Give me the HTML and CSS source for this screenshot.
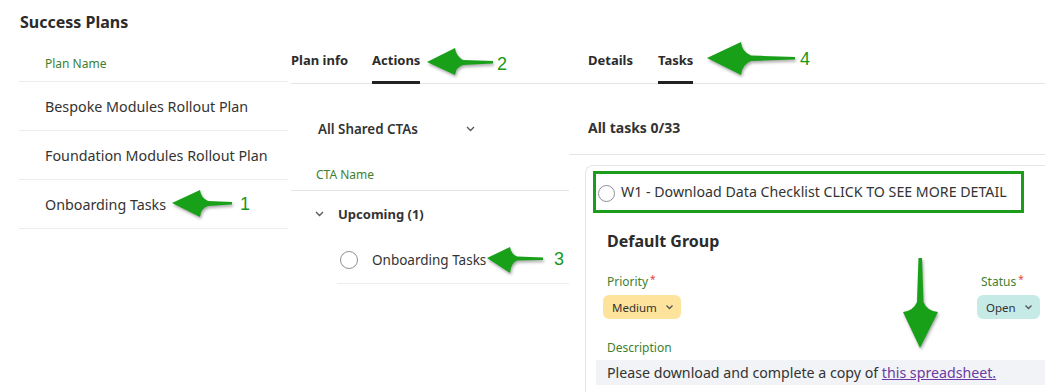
FILE: index.html
```html
<!DOCTYPE html>
<html lang="en">
<head>
    <meta charset="UTF-8">
    <meta name="viewport" content="width=device-width, initial-scale=1.0">
    <title>Success Plans - Tasks</title>
    <link rel="stylesheet" href="styles.css">
</head>
<body>
    <div class="page">
        <!-- Success plans list -->
        <section class="plans">
            <h2 class="plans-title">Success Plans</h2>
            <div class="plans-head">Plan Name</div>
            <div class="plan-row">Bespoke Modules Rollout Plan</div>
            <div class="plan-row">Foundation Modules Rollout Plan</div>
            <div class="plan-row">Onboarding Tasks</div>
        </section>

        <!-- Plan actions -->
        <section class="actions">
            <nav class="tabs">
                <span class="tab">Plan info</span>
                <span class="tab active">Actions</span>
            </nav>
            <div class="filter">
                <span>All Shared CTAs</span>
                <svg class="chevron" width="9" height="6" viewBox="0 0 9 6"><polyline points="1,1 4.5,4.5 8,1"/></svg>
            </div>
            <div class="col-head">CTA Name</div>
            <div class="group-row">
                <svg class="chevron" width="9" height="6" viewBox="0 0 9 6"><polyline points="1,1 4.5,4.5 8,1"/></svg>
                <span>Upcoming (1)</span>
            </div>
            <div class="cta-row">
                <span class="radio"></span>
                <span>Onboarding Tasks</span>
            </div>
        </section>

        <!-- CTA tasks -->
        <section class="tasks">
            <nav class="tabs">
                <span class="tab">Details</span>
                <span class="tab active">Tasks</span>
            </nav>
            <div class="tasks-count">All tasks 0/33</div>
            <div class="task-card">
                <div class="task-title">
                    <span class="radio radio-sm"></span>
                    <span>W1 - Download Data Checklist CLICK TO SEE MORE DETAIL</span>
                </div>
                <h3 class="group-name">Default Group</h3>
                <div class="fields">
                    <div class="field">
                        <div class="field-label">Priority<span class="req">*</span></div>
                        <span class="pill pill-medium">Medium
                            <svg class="chevron" width="9" height="6" viewBox="0 0 9 6"><polyline points="1.5,1.5 4.5,4.5 7.5,1.5"/></svg>
                        </span>
                    </div>
                    <div class="field">
                        <div class="field-label">Status<span class="req">*</span></div>
                        <span class="pill pill-open">Open
                            <svg class="chevron" width="9" height="6" viewBox="0 0 9 6"><polyline points="1.5,1.5 4.5,4.5 7.5,1.5"/></svg>
                        </span>
                    </div>
                </div>
                <div class="desc-label">Description</div>
                <div class="desc">Please download and complete a copy of <a href="#">this spreadsheet.</a></div>
            </div>
        </section>
    </div>

    <!-- Screenshot callouts -->
    <div class="callouts">
        <svg class="arrow arrow-1" width="64" height="32" viewBox="0 0 64 32"><path d="M2,15 L30,2 Q31,10 38,13 L62,14 L62,16.5 L38,18 Q31,20 30,29 Z"/></svg>
        <span class="num num-1">1</span>
        <svg class="arrow arrow-2" width="70" height="32" viewBox="0 0 70 32"><path d="M2,16 L30,2 Q31,10 38,14 L68,15 L68,17.5 L38,19 Q31,21 30,29 Z"/></svg>
        <span class="num num-2">2</span>
        <svg class="arrow arrow-3" width="60" height="30" viewBox="0 0 60 30"><path d="M2,13 L25,2 Q26,9 32,11.5 L58,12.5 L58,15 L32,15.5 Q26,18 25,28 Z"/></svg>
        <span class="num num-3">3</span>
        <svg class="arrow arrow-4" width="92" height="38" viewBox="0 0 92 38"><path d="M2,18 L36,2 Q37,12 46,15.5 L90,17 L90,19.5 L46,21 Q37,24.5 36,35 Z"/></svg>
        <span class="num num-4">4</span>
        <svg class="arrow arrow-down" width="40" height="94" viewBox="0 0 40 94"><path d="M19,92 L2,56 Q12,55 16,46 L17.5,2 L21,2 L22.5,46 Q26,55 37,56 Z"/></svg>
    </div>
</body>
</html>
```

FILE: styles.css
```css
/* Reset */
* {
    margin: 0;
    padding: 0;
    box-sizing: border-box;
}

body {
    font-family: 'Noto Sans', 'Open Sans', sans-serif;
    color: #333;
    background: #fff;
    width: 1045px;
    height: 392px;
    overflow: hidden;
    position: relative;
}

.page {
    display: flex;
    height: 100%;
}

/* Shared bits */
.chevron {
    fill: none;
    stroke: #555;
    stroke-width: 1.3;
    flex-shrink: 0;
}

.radio {
    width: 18px;
    height: 18px;
    border: 1.3px solid #8b8f97;
    border-radius: 50%;
    flex-shrink: 0;
}

.tabs {
    display: flex;
    align-items: flex-end;
    gap: 24px;
    height: 84px;
    border-bottom: 1px solid #e4e4e4;
}

.tab {
    font-size: 13px;
    font-weight: 700;
    line-height: 18px;
    color: #2b2b2b;
    padding-bottom: 12px;
    border-bottom: 3px solid transparent;
    margin-bottom: -1px;
}

.tab.active {
    border-bottom-color: #222;
}

/* Success plans column */
.plans {
    width: 291px;
    flex-shrink: 0;
    padding: 0 3px 0 19px;
}

.plans-title {
    font-size: 16px;
    font-weight: 700;
    line-height: 20px;
    padding: 12px 0 0 1px;
    color: #2b2b2b;
}

.plans-head {
    height: 50px;
    padding: 24px 0 0 26px;
    font-size: 12px;
    line-height: 16px;
    color: #3d8030;
    border-bottom: 1px solid #ececec;
}

.plan-row {
    height: 49px;
    display: flex;
    align-items: center;
    padding-left: 26px;
    font-size: 14.3px;
    border-bottom: 1px solid #ececec;
}

/* Actions column */
.actions {
    width: 278px;
    flex-shrink: 0;
}

.filter {
    display: flex;
    justify-content: space-between;
    align-items: center;
    width: 184px;
    padding: 36px 0 0 27px;
    font-size: 13.4px;
    font-weight: 600;
    line-height: 18px;
}

.col-head {
    padding: 29px 0 7px 25px;
    font-size: 12px;
    line-height: 16px;
    color: #3d8030;
    border-bottom: 1px solid #e4e4e4;
}

.group-row {
    height: 46px;
    display: flex;
    align-items: center;
    gap: 14px;
    padding-left: 24px;
    font-size: 13px;
    font-weight: 700;
}

.cta-row {
    height: 47px;
    margin-left: 46px;
    display: flex;
    align-items: center;
    gap: 14px;
    padding-left: 3px;
    font-size: 13.5px;
    border-bottom: 1px solid #ececec;
}

/* Tasks column */
.tasks {
    flex: 1;
}

.tasks .tabs {
    padding-left: 19px;
    gap: 25px;
}

.tasks-count {
    padding: 35px 0 17px 19px;
    font-size: 14px;
    font-weight: 700;
    line-height: 18px;
    border-bottom: 1px solid #e4e4e4;
}

.task-card {
    margin: 10px 0 0 16px;
    padding: 5px 0 0 7px;
    height: 227px;
    border-top: 1px solid #e6e6e6;
    border-left: 1px solid #e6e6e6;
    border-radius: 8px 0 0 0;
}

.task-title {
    width: 431px;
    display: flex;
    align-items: center;
    gap: 6px;
    padding: 7px 0 8px 2px;
    border: 3px solid #1b9c1b;
    font-size: 14.2px;
    line-height: 20px;
}

.radio-sm {
    width: 17px;
    height: 17px;
    margin-top: 4px;
}

.group-name {
    margin: 17px 0 0 14px;
    font-size: 16px;
    font-weight: 700;
    line-height: 22px;
    color: #2b2b2b;
}

.fields {
    display: grid;
    grid-template-columns: 374px auto;
    margin-top: 22px;
    padding-left: 10px;
}

.field-label {
    padding-left: 4px;
    font-size: 12px;
    line-height: 16px;
    color: #3d8030;
}

.req {
    color: #e0443c;
    font-size: 10px;
    vertical-align: top;
    margin-left: 2px;
    line-height: 10px;
}

.pill {
    display: inline-flex;
    align-items: center;
    gap: 8px;
    height: 24px;
    margin-top: 5px;
    padding: 0 7px 0 9px;
    border-radius: 6px;
    font-size: 11.5px;
    color: #333;
}

.pill-medium {
    background: #fde39b;
}

.pill-open {
    background: #c6ebe7;
}

.desc-label {
    margin: 21px 0 0 14px;
    font-size: 12px;
    line-height: 16px;
    color: #3d8030;
}

.desc {
    margin: 4px 0 0 3px;
    height: 25px;
    padding-left: 11px;
    background: #f1f3f6;
    font-size: 14.2px;
    line-height: 25px;
}

.desc a {
    color: #6b3aa3;
}

/* Callout arrows drawn over the screenshot */
.callouts {
    position: absolute;
    inset: 0;
    pointer-events: none;
}

.arrow {
    position: absolute;
    fill: #19a019;
    filter: drop-shadow(1px 2px 1.5px rgba(0, 0, 0, 0.35));
}

.arrow-1 { left: 170px; top: 188px; }
.arrow-2 { left: 425px; top: 46px; }
.arrow-3 { left: 485px; top: 245px; }
.arrow-4 { left: 705px; top: 40px; }
.arrow-down { left: 901px; top: 256px; }

.num {
    position: absolute;
    font-family: 'Liberation Sans', Arial, sans-serif;
    font-size: 18px;
    line-height: 18px;
    color: #17991a;
}

.num-1 { left: 240px; top: 195px; }
.num-2 { left: 497px; top: 55px; }
.num-3 { left: 554px; top: 250px; }
.num-4 { left: 800px; top: 50px; }
```
